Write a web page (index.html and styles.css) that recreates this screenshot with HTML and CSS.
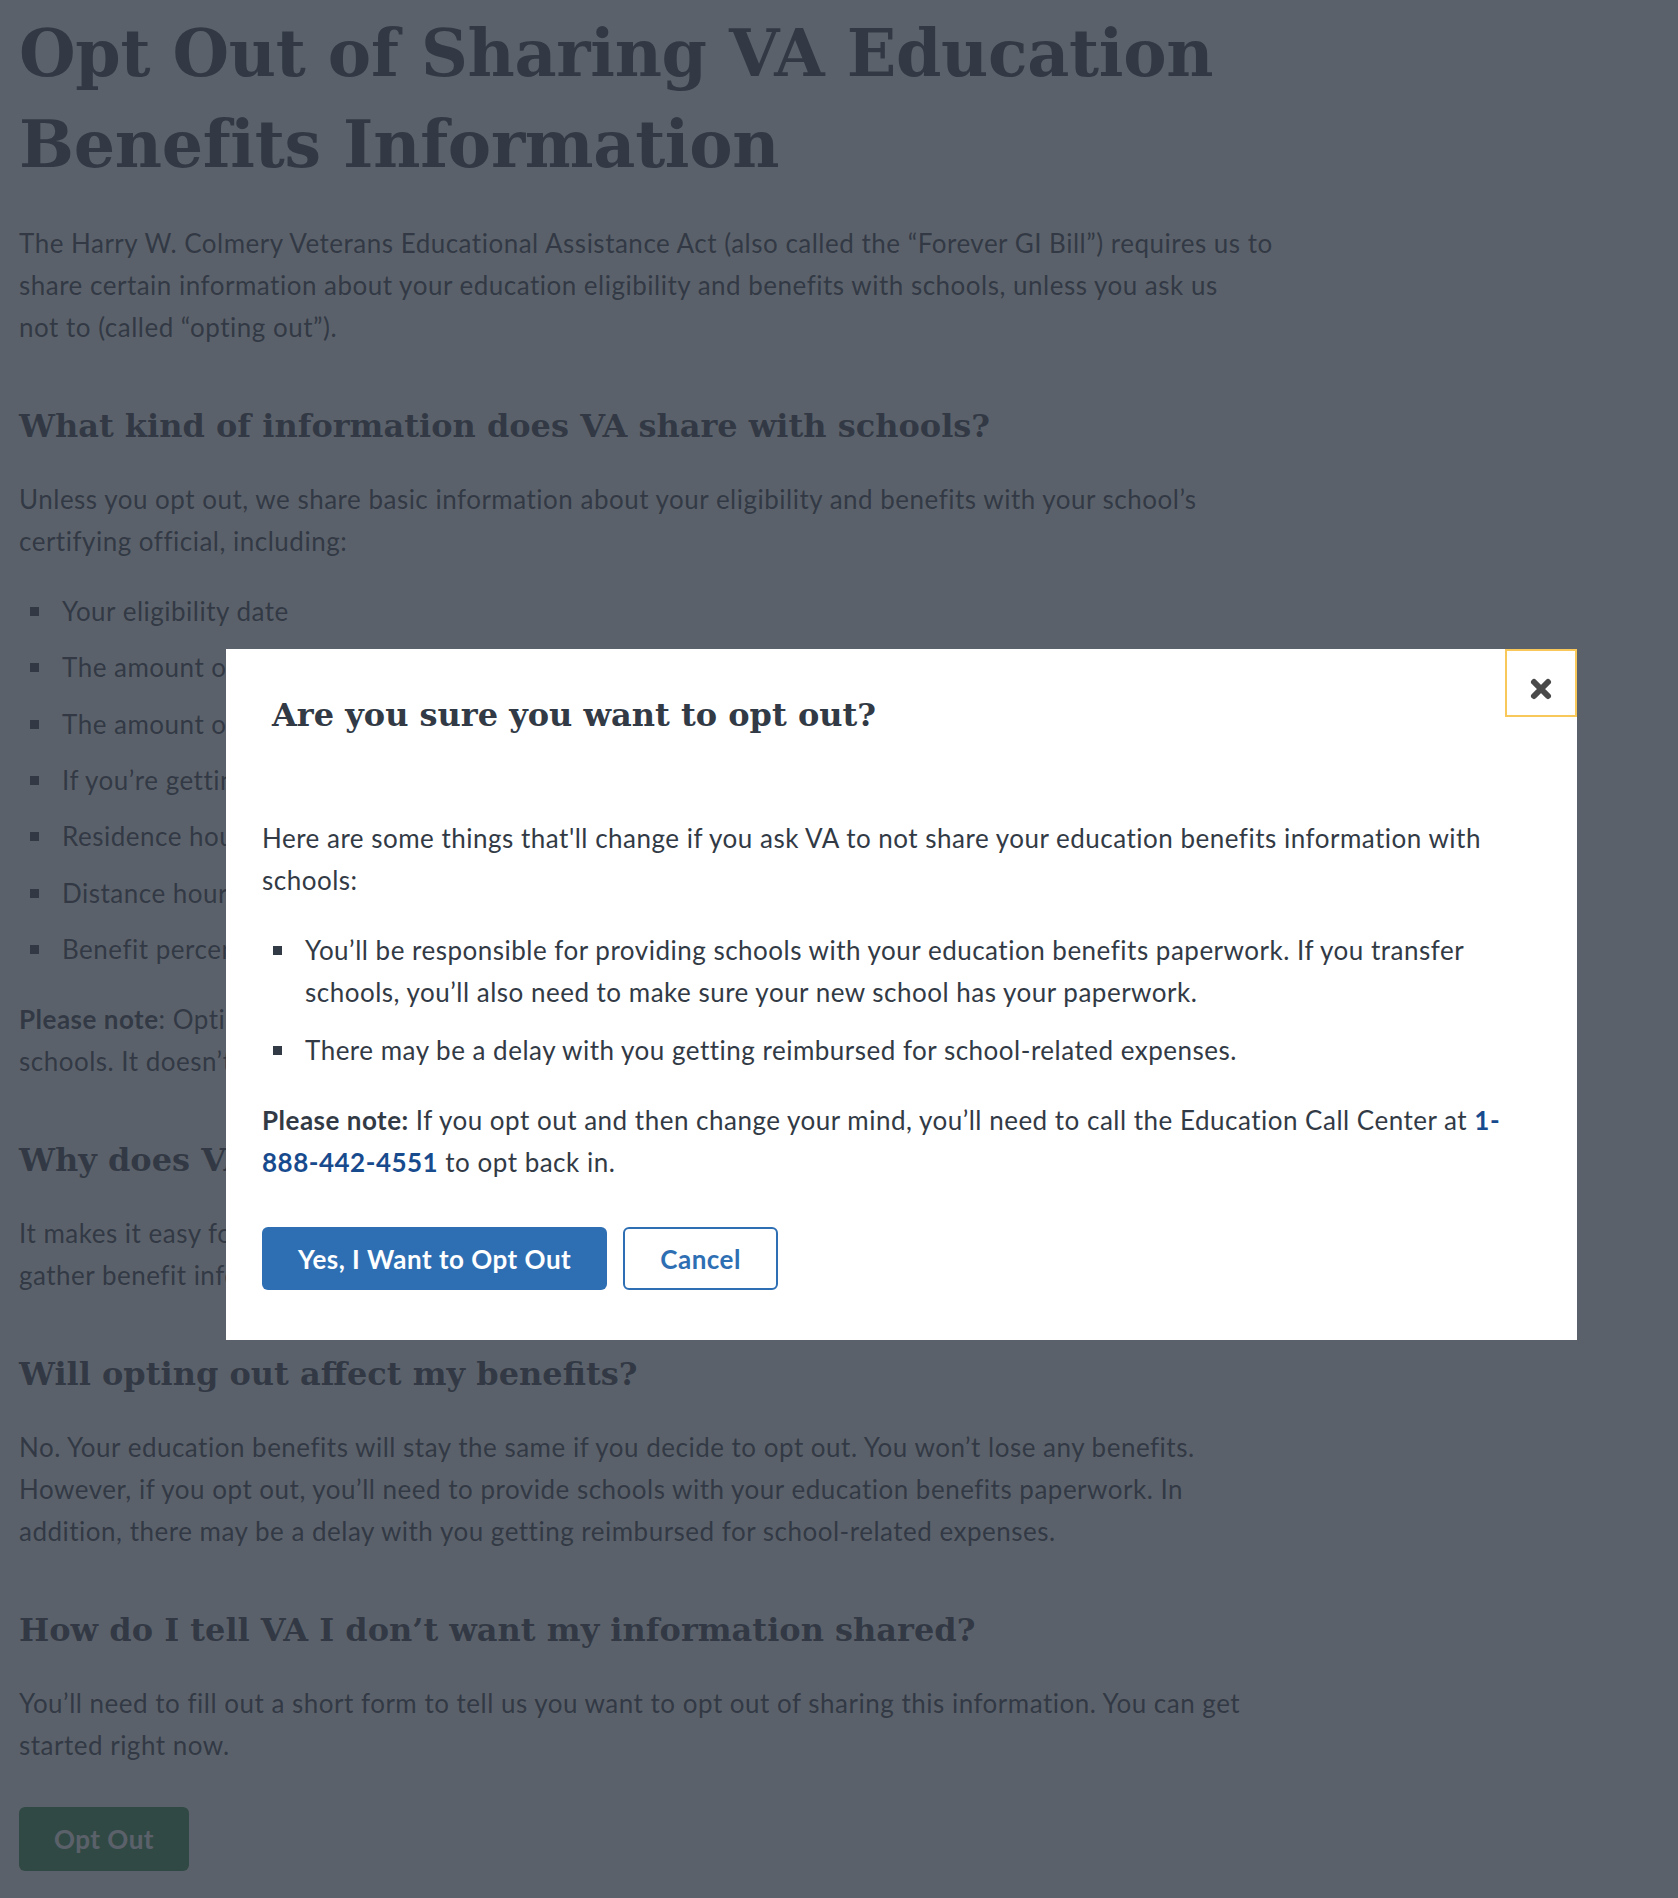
FILE: index.html
```html
<!DOCTYPE html>
<html lang="en">
<head>
<meta charset="utf-8">
<title>Opt Out of Sharing VA Education Benefits Information</title>
<link rel="stylesheet" href="styles.css">
</head>
<body>
<main class="page">
  <h1 class="page-title">Opt Out of Sharing VA Education Benefits Information</h1>
  <p>The Harry W. Colmery Veterans Educational Assistance Act (also called the “Forever GI Bill”) requires us to share certain information about your education eligibility and benefits with schools, unless you ask us not&nbsp;to (called “opting out”).</p>

  <h2>What kind of information does VA share with schools?</h2>
  <p>Unless you opt out, we share basic information about your eligibility and benefits with your school’s certifying official, including:</p>
  <ul class="bullets">
    <li>Your eligibility date</li>
    <li>The amount of benefits you’ve used</li>
    <li>The amount of benefits you have left</li>
    <li>If you’re getting the Post-9/11 GI Bill</li>
    <li>Residence hours you’ve used</li>
    <li>Distance hours you’ve used</li>
    <li>Benefit percentage level</li>
  </ul>
  <p><strong>Please note</strong>: Opting out only affects the information we share with<br>schools. It doesn’t affect your benefits.</p>

  <h2>Why does VA share this information?</h2>
  <p>It makes it easy for your school’s certifying official to quickly<br>gather benefit information to help you with enrollment.</p>

  <h2>Will opting out affect my benefits?</h2>
  <p>No. Your education benefits will stay the same if you decide to opt out. You won’t lose any benefits. However, if you opt out, you’ll need to provide schools with your education benefits paperwork. In addition, there may be a delay with you getting reimbursed for school-related expenses.</p>

  <h2>How do I tell VA I don’t want my information shared?</h2>
  <p>You’ll need to fill out a short form to tell us you want to opt out of sharing this information. You can get started right now.</p>

  <button class="btn btn-green" type="button">Opt Out</button>
</main>

<div class="overlay"></div>

<div class="modal" role="dialog" aria-labelledby="modal-title">
  <button class="modal-close" type="button" aria-label="Close">
    <svg viewBox="0 0 24 24" width="24" height="24" aria-hidden="true">
      <path d="M5 5 L19 19 M19 5 L5 19" stroke="#4a4a4a" stroke-width="6" stroke-linecap="round" fill="none"/>
    </svg>
  </button>
  <h3 id="modal-title" class="modal-title">Are you sure you want to opt out?</h3>
  <p>Here are some things that'll change if you ask VA to not share your education benefits information with schools:</p>
  <ul class="bullets bullets-tight">
    <li>You’ll be responsible for providing schools with your education benefits paperwork. If you transfer schools, you’ll also need to make sure your new school has your paperwork.</li>
    <li>There may be a delay with you getting reimbursed for school-related expenses.</li>
  </ul>
  <p><strong>Please note:</strong> If you opt out and then change your mind, you’ll need to call the Education Call Center at <a class="phone" href="tel:18884424551">1-888-442-4551</a> to opt back in.</p>
  <div class="modal-actions">
    <button class="btn btn-primary" type="button">Yes, I Want to Opt Out</button>
    <button class="btn btn-outline" type="button">Cancel</button>
  </div>
</div>
</body>
</html>
```

FILE: styles.css
```css
html, body {
  margin: 0;
  padding: 0;
}

body {
  background: #ffffff;
  color: #323a45;
  font-family: Lato, "Open Sans", sans-serif;
  font-size: 26px;
  line-height: 42px;
  letter-spacing: 0.5px;
}

.page {
  padding: 8px 19px 0;
  max-width: 1272px;
}

.page-title {
  font-family: "DejaVu Serif", "Liberation Serif", serif;
  font-weight: bold;
  font-size: 65px;
  line-height: 91px;
  margin: 0 0 32px;
  letter-spacing: -0.3px;
}

h2, .modal-title {
  font-family: "DejaVu Serif", "Liberation Serif", serif;
  font-weight: bold;
  font-size: 32px;
  line-height: 44px;
  letter-spacing: 0;
}

h2 {
  margin: 56px 0 30px;
}

p {
  margin: 0 0 28px;
}

strong {
  font-weight: bold;
}

.bullets {
  list-style: none;
  margin: 0 0 28px;
  padding: 0;
}

.bullets li {
  position: relative;
  padding-left: 43px;
  margin-bottom: 14.33px;
}

.bullets li::before {
  content: "";
  position: absolute;
  left: 11px;
  top: 17px;
  width: 9px;
  height: 9px;
  background: #323a45;
}

.bullets-tight li {
  margin-bottom: 16px;
}

.btn {
  font-family: Lato, "Open Sans", sans-serif;
  font-weight: bold;
  font-size: 26px;
  letter-spacing: 0.5px;
  line-height: 1;
  border-radius: 6px;
  cursor: pointer;
  height: 63px;
  padding: 0 36px;
}

.btn-green {
  background: #2e8540;
  color: #ffffff;
  border: none;
  margin-top: 13px;
  height: 64px;
  padding: 0 35px;
}

.btn-primary {
  background: #2e6fb4;
  color: #ffffff;
  border: none;
}

.btn-outline {
  background: #ffffff;
  color: #2e6fb4;
  border: 2px solid #2e6fb4;
  padding: 0 35px;
}

.overlay {
  position: fixed;
  inset: 0;
  background: rgba(50, 58, 69, 0.8);
}

.modal {
  position: fixed;
  top: 649px;
  left: 226px;
  width: 1351px;
  box-sizing: border-box;
  background: #ffffff;
  padding: 44px 36px 50px;
}

.modal-title {
  margin: 0 0 80px;
  padding-left: 10px;
}

.modal-close {
  position: absolute;
  top: 0;
  right: 0;
  width: 72px;
  height: 68px;
  box-sizing: border-box;
  border: 2px solid #f8c85a;
  background: #ffffff;
  padding: 12px 0 0;
  display: flex;
  align-items: center;
  justify-content: center;
  cursor: pointer;
}

.phone {
  color: #184b8e;
  font-weight: bold;
  text-decoration: none;
}

.modal-actions {
  display: flex;
  gap: 16px;
  padding-top: 16px;
}
```
